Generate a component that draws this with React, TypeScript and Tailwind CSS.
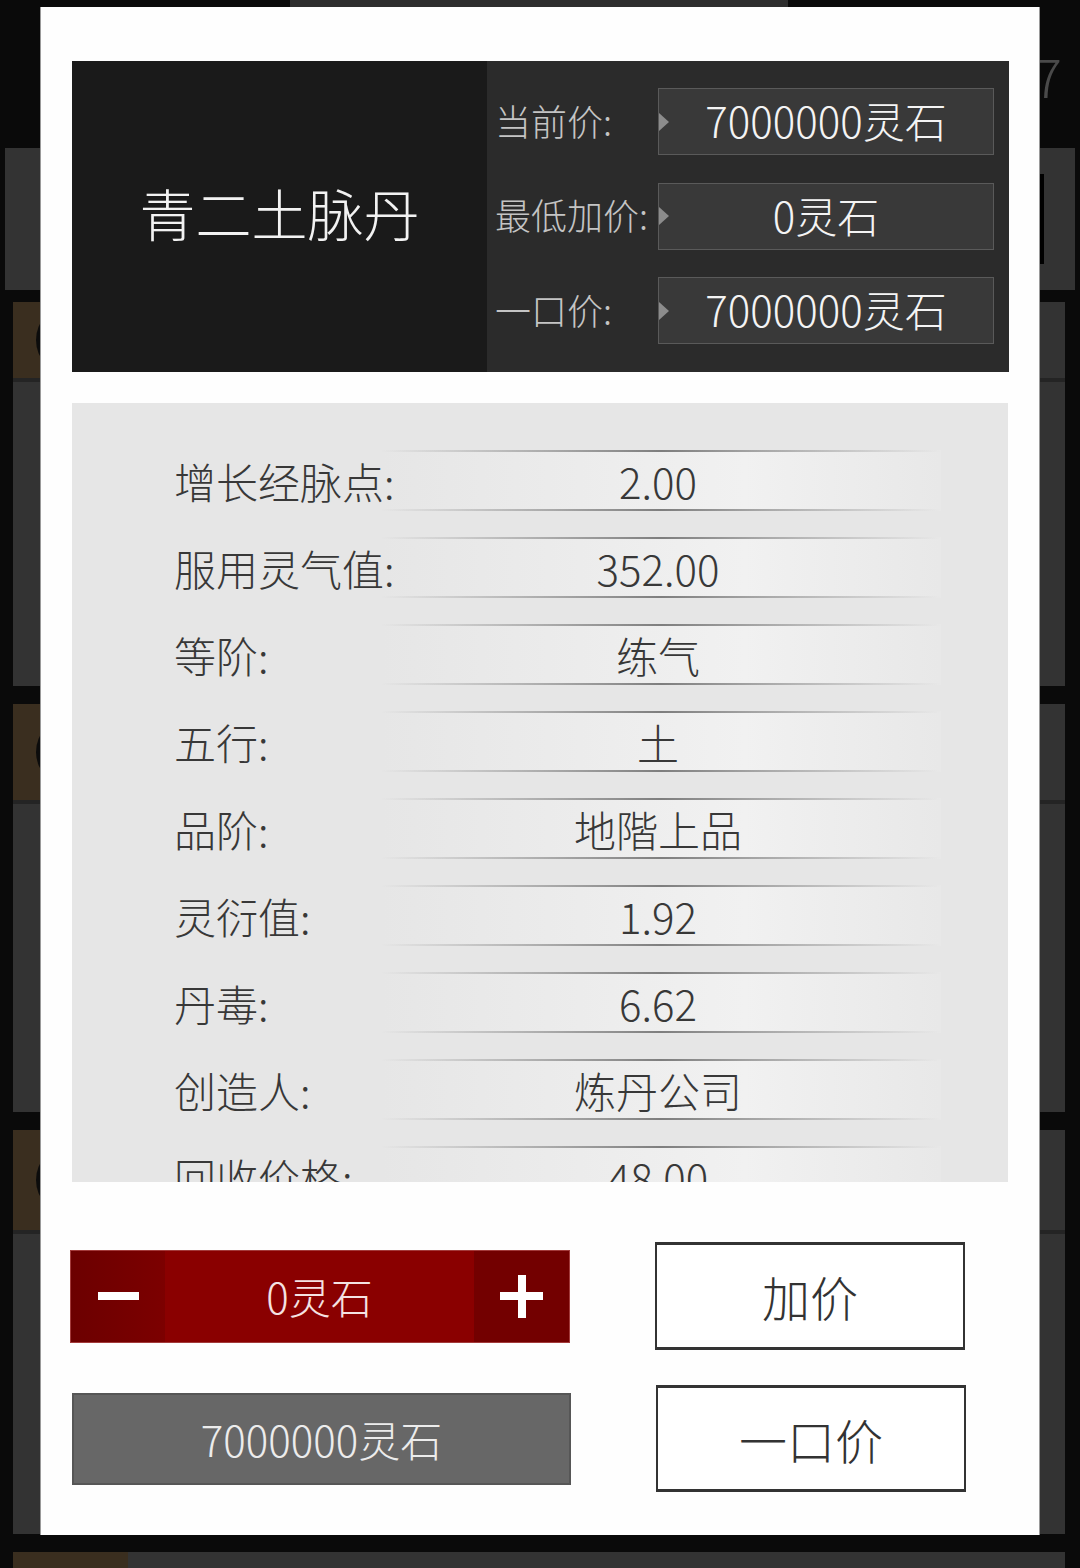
import React from "react";

const font = "font-['Noto_Sans_CJK_SC','Noto_Sans',sans-serif]";

const prices = [
  { label: "当前价:", value: "7000000灵石" },
  { label: "最低加价:", value: "0灵石" },
  { label: "一口价:", value: "7000000灵石" },
];

const attrs = [
  { label: "增长经脉点:", value: "2.00" },
  { label: "服用灵气值:", value: "352.00" },
  { label: "等阶:", value: "练气" },
  { label: "五行:", value: "土" },
  { label: "品阶:", value: "地階上品" },
  { label: "灵衍值:", value: "1.92" },
  { label: "丹毒:", value: "6.62" },
  { label: "创造人:", value: "炼丹公司" },
  { label: "回收价格:", value: "48.00" },
];

const items = [
  { h: "h-[384px]", top: "h-[76px]" },
  { h: "h-[408px]", top: "h-[96px]" },
  { h: "h-[404px]", top: "h-[100px]" },
  { h: "h-[220px]", top: "h-[120px]" },
];

const ListItem = ({ h, top }: { h: string; top: string }) => (
  <div className={`flex flex-col bg-[#333333] shrink-0 ${h}`}>
    <div className={`flex ${top}`}>
      <div className="w-[115px] bg-[#3a2e1f] flex items-center justify-center">
        <div className="w-[70px] h-[70px] rounded-full bg-[#0c0c0c]" />
      </div>
    </div>
    <div className="h-[4px] bg-[#242424]" />
  </div>
);

const AttrRow = ({ label, value }: { label: string; value: string }) => (
  <div className="flex items-center h-[61px] shrink-0">
    <div className="relative z-10 w-[309px] pl-[102px] whitespace-nowrap text-[42px] leading-none text-[#383838]">
      {label}
    </div>
    <div className="w-[560px] h-full flex flex-col bg-linear-to-r from-[#e6e6e6] via-[#f1f1f1] via-65% to-[#e8e8e8]">
      <div className="h-[2px] bg-linear-to-r from-transparent via-[#7e7e7e] to-transparent" />
      <div className="flex-1 flex items-center justify-center pr-[6px] text-[42px] leading-none text-[#383838]">
        {value}
      </div>
      <div className="h-[2px] bg-linear-to-r from-transparent via-[#7e7e7e] to-transparent" />
    </div>
  </div>
);

export default function App() {
  return (
    <div className={`relative w-[1080px] h-[1568px] overflow-hidden bg-[#0a0a0a] ${font} font-light`}>
      {/* page behind the dialog */}
      <div className="flex flex-col">
        <div className="flex h-[148px] items-start">
          <div className="ml-[290px] w-[498px] h-[40px] bg-[#2e2e2e]" />
          <div className="flex-1" />
          <div className="mt-[48px] mr-[18px] text-[54px] leading-none text-[#4a4a4a]">17</div>
        </div>
        <div className="mx-[5px] h-[142px] bg-[#333333] flex items-center justify-end pr-[31px]">
          <div className="w-[600px] h-[90px] bg-black" />
        </div>
        <div className="mt-[12px] ml-[13px] mr-[15px] flex flex-col gap-[18px]">
          {items.map((it, i) => (
            <ListItem key={i} h={it.h} top={it.top} />
          ))}
        </div>
      </div>

      {/* dialog */}
      <div className="absolute left-[40px] top-[7px] w-[1000px] h-[1528px] bg-[#fefefe] border-x border-[#9a9a9a] flex flex-col pt-[54px]">
        <div className="ml-[31px] w-[937px] h-[311px] flex">
          <div className="w-[415px] pb-[10px] bg-[#1a1a1a] flex items-center justify-center text-[56px] leading-none text-[#f2f2f2]">
            青二土脉丹
          </div>
          <div className="flex-1 bg-[#2b2b2b] flex flex-col justify-between pt-[27px] pb-[28px] pl-[8px] pr-[15px]">
            {prices.map((p) => (
              <div key={p.label} className="flex items-center h-[67px]">
                <div className="w-[163px] pb-[4px] whitespace-nowrap text-[36px] leading-none text-[#c4c4c4]">
                  {p.label}
                </div>
                <div className="relative flex-1 h-full bg-[#393939] border border-[#5a5a5a] flex items-center justify-center pb-[3px] text-[42px] leading-none text-[#f4f4f4]">
                  <div className="absolute left-0 top-1/2 -translate-y-1/2 w-0 h-0 border-y-[9px] border-y-transparent border-l-[10px] border-l-[#8c8c8c]" />
                  {p.value}
                </div>
              </div>
            ))}
          </div>
        </div>

        <div className="mt-[31px] ml-[31px] w-[936px] h-[779px] overflow-hidden bg-[#e6e6e6] flex flex-col gap-[26px] pt-[47px]">
          {attrs.map((a) => (
            <AttrRow key={a.label} label={a.label} value={a.value} />
          ))}
        </div>

        <div className="mt-[60px] pl-[29px] flex flex-col gap-[35px]">
          <div className="flex items-center h-[108px] gap-[84px]">
            <div className="w-[501px] flex">
              <div className="w-[500px] h-[93px] flex border border-[#a33a3a] bg-[#8a0000]">
                <div className="w-[94px] bg-linear-to-r from-[#6c0000] to-[#7c0000] flex items-center justify-center">
                  <div className="w-[41px] h-[8px] bg-white" />
                </div>
                <div className="flex-1 flex items-center justify-center text-[42px] leading-none text-[#f5e2e2]">
                  0灵石
                </div>
                <div className="w-[95px] bg-[#730000] flex items-center justify-center">
                  <div className="relative w-[43px] h-[43px] flex items-center justify-center">
                    <div className="w-[43px] h-[8px] bg-white" />
                    <div className="absolute w-[8px] h-[43px] bg-white" />
                  </div>
                </div>
              </div>
            </div>
            <button className="w-[310px] h-[108px] bg-white border-x-2 border-y-[3px] border-[#333333] flex items-center justify-center text-[48px] leading-none text-[#333333]">
              加价
            </button>
          </div>
          <div className="flex items-center h-[107px] gap-[84px]">
            <div className="w-[501px] flex">
              <div className="ml-[2px] w-[499px] h-[92px] bg-[#676767] border-2 border-[#565656] flex items-center justify-center text-[42px] leading-none text-[#ececec]">
                7000000灵石
              </div>
            </div>
            <button className="ml-[1px] w-[310px] h-[107px] bg-white border-x-2 border-y-[3px] border-[#333333] flex items-center justify-center text-[48px] leading-none text-[#333333]">
              一口价
            </button>
          </div>
        </div>
      </div>
    </div>
  );
}
